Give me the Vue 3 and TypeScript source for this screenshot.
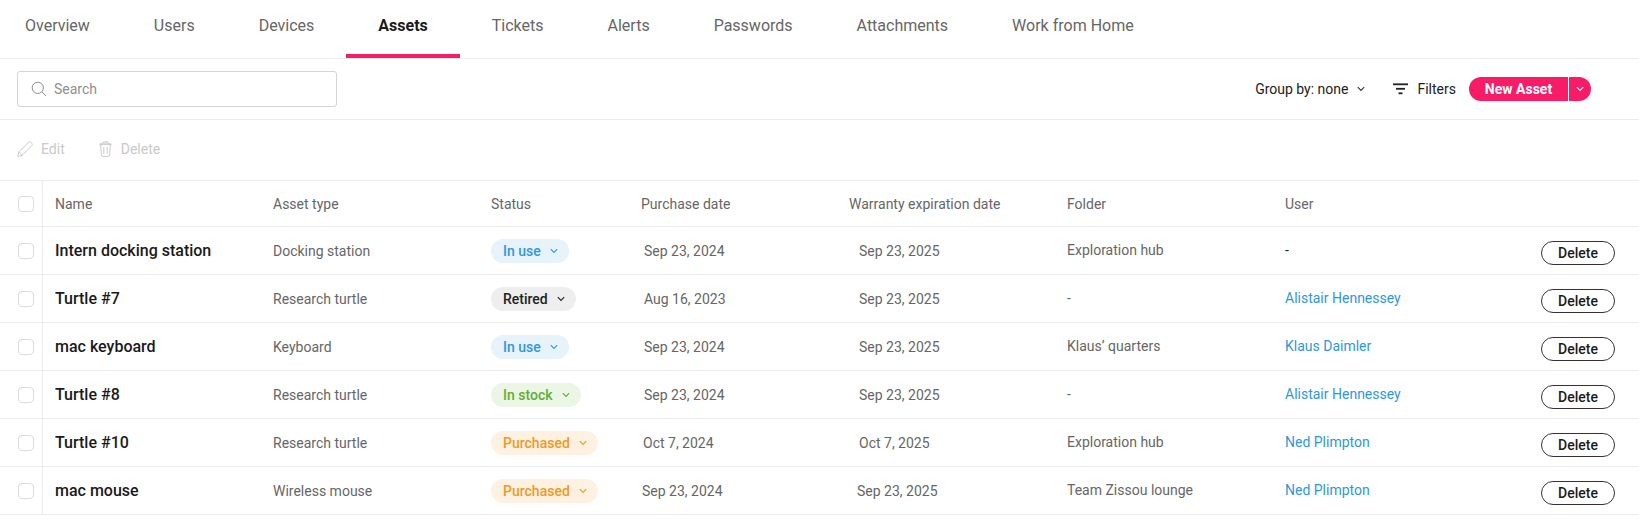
<script setup lang="ts">
interface Row {
  name: string
  type: string
  status: string
  tone: string
  purchase: string
  warranty: string
  folder: string
  user: string
  shift?: string
}
const tabs: string[] = ['Overview', 'Users', 'Devices', 'Assets', 'Tickets', 'Alerts', 'Passwords', 'Attachments', 'Work from Home']
const rows: Row[] = [
  { name: 'Intern docking station', type: 'Docking station', status: 'In use', tone: 'blue', purchase: 'Sep 23, 2024', warranty: 'Sep 23, 2025', folder: 'Exploration hub', user: '-' },
  { name: 'Turtle #7', type: 'Research turtle', status: 'Retired', tone: 'grey', purchase: 'Aug 16, 2023', warranty: 'Sep 23, 2025', folder: '-', user: 'Alistair Hennessey' },
  { name: 'mac keyboard', type: 'Keyboard', status: 'In use', tone: 'blue', purchase: 'Sep 23, 2024', warranty: 'Sep 23, 2025', folder: 'Klaus’ quarters', user: 'Klaus Daimler' },
  { name: 'Turtle #8', type: 'Research turtle', status: 'In stock', tone: 'green', purchase: 'Sep 23, 2024', warranty: 'Sep 23, 2025', folder: '-', user: 'Alistair Hennessey' },
  { name: 'Turtle #10', type: 'Research turtle', status: 'Purchased', tone: 'orange', purchase: 'Oct 7, 2024', warranty: 'Oct 7, 2025', folder: 'Exploration hub', user: 'Ned Plimpton', shift: 'mid' },
  { name: 'mac mouse', type: 'Wireless mouse', status: 'Purchased', tone: 'orange', purchase: 'Sep 23, 2024', warranty: 'Sep 23, 2025', folder: 'Team Zissou lounge', user: 'Ned Plimpton', shift: 'low' }
]
</script>

<template>
  <div class="page">
    <nav class="tabs">
      <a v-for="t in tabs" :key="t" class="tab" :class="{ active: t === 'Assets' }">{{ t }}</a>
    </nav>

    <div class="toolbar">
      <label class="search">
        <svg width="16" height="16" viewBox="0 0 16 16" fill="none" stroke="#8c8c8c" stroke-width="1">
          <circle cx="6.8" cy="6.8" r="5.6" />
          <path d="M10.9 10.9 L15 15" />
        </svg>
        <span>Search</span>
      </label>
      <div class="spacer"></div>
      <div class="group">
        <span>Group by: none</span>
        <svg width="8" height="6" viewBox="0 0 8 6" fill="none" stroke="#333" stroke-width="1.1">
          <path d="M.8 1.2 L4 4.4 L7.2 1.2" />
        </svg>
      </div>
      <div class="filters">
        <svg width="15" height="12" viewBox="0 0 15 12" fill="#222">
          <rect x="0" y="0.4" width="15" height="1.8" />
          <rect x="3" y="4.9" width="9" height="1.8" />
          <rect x="5.5" y="9.4" width="4" height="1.8" />
        </svg>
        <span>Filters</span>
      </div>
      <div class="new">
        <span class="new-main">New Asset</span>
        <span class="new-caret">
          <svg width="8" height="6" viewBox="0 0 8 6" fill="none" stroke="#fff" stroke-width="1.1">
            <path d="M.8 1.2 L4 4.4 L7.2 1.2" />
          </svg>
        </span>
      </div>
    </div>

    <div class="actions">
      <span class="action edit">
        <svg width="16" height="16" viewBox="0 0 16 16" fill="none" stroke="#cccccc" stroke-width="1">
          <path d="M.8 15.4 L1.8 10.9 L11.4 1.3 Q12.6 .3 13.8 1.3 L14.8 2.3 Q15.8 3.5 14.8 4.7 L5.2 14.3 Z" />
          <path d="M1.8 10.9 L5.2 14.3" />
        </svg>
        Edit
      </span>
      <span class="action">
        <svg width="13" height="16" viewBox="0 0 13 16" fill="none" stroke="#cccccc" stroke-width="1">
          <path d="M.6 3.6 Q.8 2.2 3 2.2 H10 Q12.2 2.2 12.4 3.6 Z" />
          <path d="M4.4 2.2 V.8 H8.6 V2.2" />
          <path d="M1.6 3.6 L2.4 14 Q2.5 15.4 4 15.4 H9 Q10.5 15.4 10.6 14 L11.4 3.6" />
          <path d="M4.8 6 V12.8 M8.2 6 V12.8" />
        </svg>
        Delete
      </span>
    </div>

    <div class="table">
      <div class="row head">
        <div class="cb"><i class="box"></i></div>
        <div class="cell">Name</div>
        <div class="cell">Asset type</div>
        <div class="cell">Status</div>
        <div class="cell">Purchase date</div>
        <div class="cell">Warranty expiration date</div>
        <div class="cell">Folder</div>
        <div class="cell">User</div>
        <div class="cell"></div>
      </div>
      <div v-for="r in rows" :key="r.name" class="row body">
        <div class="cb"><i class="box"></i></div>
        <div class="cell name">{{ r.name }}</div>
        <div class="cell type">{{ r.type }}</div>
        <div class="cell">
          <span class="pill" :class="r.tone">
            {{ r.status }}
            <svg width="8" height="6" viewBox="0 0 8 6" fill="none" stroke="currentColor" stroke-width="1.1">
              <path d="M.8 1.2 L4 4.4 L7.2 1.2" />
            </svg>
          </span>
        </div>
        <div class="cell date purchase" :class="r.shift">{{ r.purchase }}</div>
        <div class="cell date warranty" :class="r.shift">{{ r.warranty }}</div>
        <div class="cell folder">{{ r.folder }}</div>
        <div class="cell user" :class="{ link: r.user !== '-' }">{{ r.user }}</div>
        <div class="cell act"><button class="del">Delete</button></div>
      </div>
    </div>
  </div>
</template>

<style>
html, body { margin: 0; background: #fff; }
</style>

<style scoped>
.page {
  width: 1639px;
  height: 528px;
  overflow: hidden;
  font-family: Roboto, "Liberation Sans", sans-serif;
  font-size: 14px;
  color: #222;
  background: #fff;
}
.tabs {
  display: flex;
  height: 58px;
  border-bottom: 1px solid #ececec;
}
.tab {
  padding: 16px 32px 0;
  font-size: 16px;
  line-height: 19px;
  color: #666;
}
.tab:first-child { padding-left: 25px; }
.tab.active {
  color: #1a1a1a;
  font-weight: 700;
  border-bottom: 4px solid #f81b68;
  height: 38px;
}
.toolbar {
  display: flex;
  align-items: center;
  height: 61px;
  padding: 0 48px 0 17px;
  border-bottom: 1px solid #ececec;
  box-sizing: border-box;
}
.search {
  display: flex;
  align-items: center;
  gap: 7px;
  box-sizing: border-box;
  width: 320px;
  height: 36px;
  padding: 0 12px 0 13px;
  border: 1px solid #d4d4d4;
  border-radius: 3px;
  color: #8f8f8f;
}
.spacer { flex: 1; }
.group {
  display: flex;
  align-items: center;
  gap: 9px;
  color: #222;
  margin-right: 28px;
}
.filters {
  display: flex;
  align-items: center;
  gap: 9px;
  color: #222;
  margin-right: 13px;
}
.new {
  display: flex;
  height: 24px;
  line-height: 24px;
  color: #fff;
  font-weight: 700;
}
.new-main {
  width: 99px;
  text-align: center;
  background: #f81b68;
  border-radius: 12px 0 0 12px;
}
.new-caret {
  display: flex;
  align-items: center;
  justify-content: center;
  width: 22px;
  margin-left: 1px;
  background: #f81b68;
  border-radius: 0 12px 12px 0;
}
.actions {
  display: flex;
  align-items: center;
  gap: 34px;
  height: 60px;
  padding: 0 0 2px 17px;
  color: #c9c9c9;
  box-sizing: border-box;
}
.action {
  display: flex;
  align-items: center;
  gap: 8px;
}
.action:last-child { gap: 9px; }
.table { border-top: 1px solid #ececec; }
.row {
  display: grid;
  grid-template-columns: 43px 217px 218px 150px 208px 218px 218px 218px 1fr;
  align-items: stretch;
  height: 48px;
  box-sizing: border-box;
  border-bottom: 1px solid #ececec;
}
.row.head { height: 46px; color: #666; }
.cb {
  display: flex;
  align-items: center;
  padding-left: 18px;
  border-right: 1px solid #ececec;
  box-sizing: border-box;
}
.box {
  display: block;
  box-sizing: border-box;
  width: 16px;
  height: 16px;
  border: 1px solid #dcdcdc;
  border-radius: 4px;
}
.cell {
  display: flex;
  align-items: center;
  padding-left: 13px;
  color: #666;
}
.row > .cell:nth-child(2) { padding-left: 12px; }
.name {
  font-size: 16px;
  font-weight: 500;
  color: #1a1a1a;
}
.row .name { color: #1a1a1a; }
.pill {
  display: inline-flex;
  align-items: center;
  gap: 9px;
  height: 24px;
  padding: 0 11px 0 12px;
  border-radius: 12px;
  font-weight: 500;
}
.pill.blue { background: #e6f3fb; color: #2f98dc; }
.pill.grey { background: #eeeeee; color: #222; }
.pill.green { background: #ecf6e5; color: #62ad36; }
.pill.orange { background: #fdf1e2; color: #f09a1c; }
.purchase { padding-left: 16px; }
.purchase.mid { padding-left: 15px; }
.purchase.low { padding-left: 14px; }
.warranty { padding-left: 23px; }
.warranty.low { padding-left: 21px; }
.folder, .user { padding-bottom: 2px; box-sizing: border-box; }
.user { color: #222; }
.user.link { color: #2f98dc; }
.act {
  justify-content: flex-end;
  padding-right: 24px;
}
.del {
  box-sizing: border-box;
  width: 74px;
  height: 24px;
  margin-top: 5px;
  padding: 0;
  border: 1px solid #333;
  border-radius: 12px;
  background: #fff;
  color: #1a1a1a;
  font-family: inherit;
  font-size: 14px;
  font-weight: 500;
}
</style>
